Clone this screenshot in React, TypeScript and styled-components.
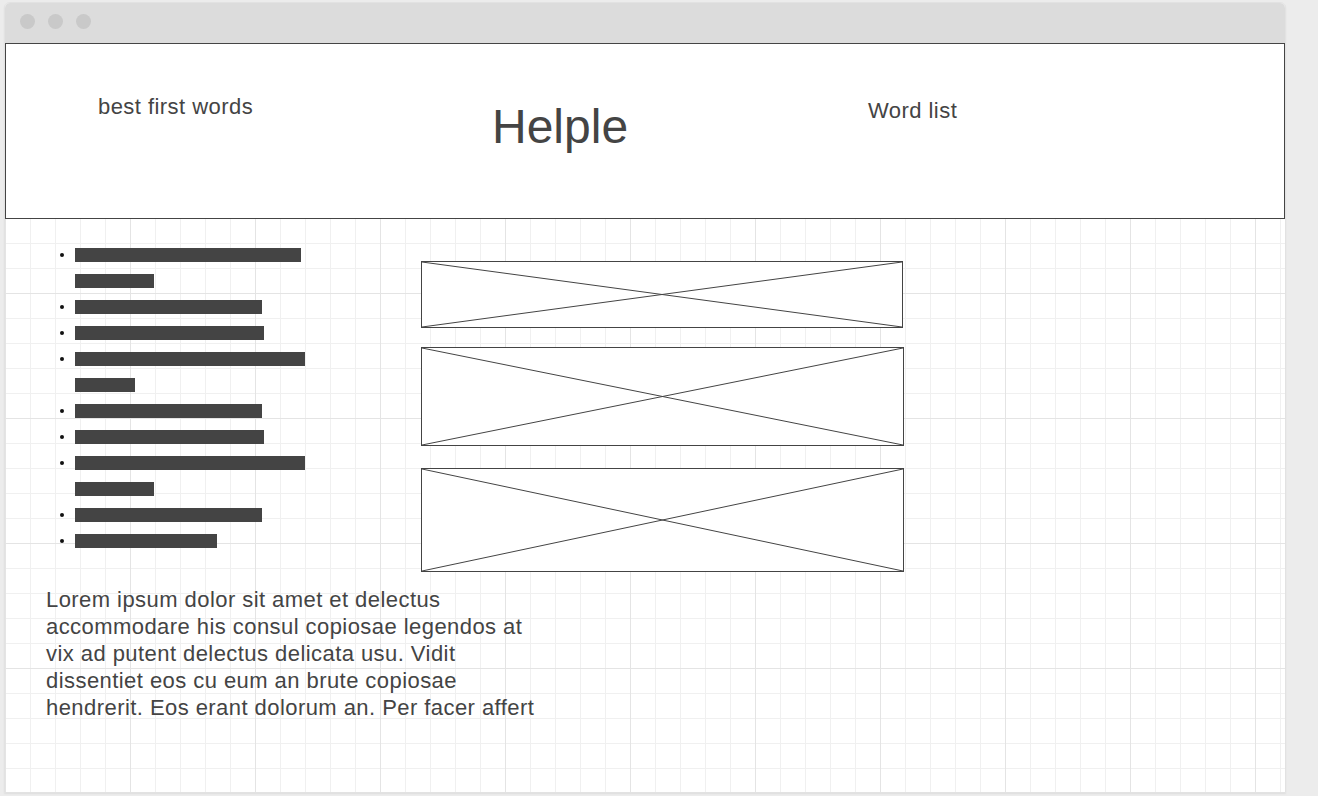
import React from "react";
import styled, { createGlobalStyle } from "styled-components";

const GlobalStyle = createGlobalStyle`
  html, body {
    margin: 0;
    padding: 0;
    background: #ececec;
    font-family: "Liberation Sans", Arial, sans-serif;
    color: #444;
  }
  * { box-sizing: border-box; }
`;

const Page = styled.div`
  padding: 2px 0 0 4px;
  width: 1318px;
  height: 796px;
  overflow: hidden;
`;

const Window = styled.div`
  width: 1282px;
  height: 791px;
  border: 1px solid #e2e2e2;
  border-radius: 6px 6px 0 0;
  display: flex;
  flex-direction: column;
  box-shadow: 0 1px 2px rgba(0, 0, 0, 0.06);
  background: #fff;
`;

const TitleBar = styled.div`
  height: 40px;
  flex: none;
  background: #dcdcdc;
  border-radius: 5px 5px 0 0;
  display: flex;
  align-items: flex-start;
  gap: 13px;
  padding: 11px 0 0 15px;
`;

const Dot = styled.span`
  width: 15px;
  height: 15px;
  border-radius: 50%;
  background: #c9c9c9;
`;

const Content = styled.div`
  flex: 1;
  background-color: #fff;
  background-image:
    linear-gradient(to right, #e4e4e4 1px, transparent 1px),
    linear-gradient(to bottom, #e4e4e4 1px, transparent 1px),
    linear-gradient(to right, #f0f0f0 1px, transparent 1px),
    linear-gradient(to bottom, #f0f0f0 1px, transparent 1px);
  background-size: 125px 125px, 125px 125px, 25px 25px, 25px 25px;
  display: flex;
  flex-direction: column;
`;

const Header = styled.header`
  height: 176px;
  flex: none;
  border: 1px solid #444;
  background: #fff;
  display: grid;
  grid-template-columns: 394px 376px 1fr;
  align-items: start;
  padding-left: 92px;
`;

const NavText = styled.div<{ $top: number }>`
  font-size: 22px;
  line-height: 26px;
  letter-spacing: 0.45px;
  margin-top: ${(p) => p.$top}px;
  color: #444;
`;

const Logo = styled.h1`
  margin: 55px 0 0 0;
  font-size: 48px;
  line-height: 56px;
  font-weight: 400;
  color: #444;
`;

const Main = styled.main`
  padding: 23px 0 0 55px;
`;

const Row = styled.div`
  display: grid;
  grid-template-columns: 361px 484px;
  align-items: start;
`;

const List = styled.ul`
  margin: 0;
  padding: 0;
  list-style: none;
`;

const Item = styled.li`
  display: grid;
  grid-template-columns: 15px 1fr;
  &::before {
    content: "";
    width: 4px;
    height: 4px;
    border-radius: 50%;
    background: #111;
    margin-top: 11px;
  }
`;

const Lines = styled.div`
  display: flex;
  flex-direction: column;
`;

const Bar = styled.span<{ $w: number }>`
  display: block;
  height: 14px;
  margin: 6px 0;
  width: ${(p) => p.$w}px;
  background: #444;
`;

const Images = styled.div`
  display: flex;
  flex-direction: column;
  align-items: flex-start;
`;

const Placeholder = styled.div<{ $w: number; $h: number; $mt: number }>`
  width: ${(p) => p.$w}px;
  height: ${(p) => p.$h}px;
  margin-top: ${(p) => p.$mt}px;
  border: 1px solid #444;
  background: #fff;
  svg {
    display: block;
    width: 100%;
    height: 100%;
  }
`;

const Paragraph = styled.p`
  margin: 14px 0 0 -14px;
  width: 495px;
  font-size: 22px;
  line-height: 27px;
  letter-spacing: 0.44px;
  color: #444;
`;

const items: number[][] = [
  [226, 79],
  [187],
  [189],
  [230, 60],
  [187],
  [189],
  [230, 79],
  [187],
  [142],
];

const boxes = [
  { w: 482, h: 67, mt: 19 },
  { w: 483, h: 99, mt: 19 },
  { w: 483, h: 104, mt: 22 },
];

const CrossBox: React.FC<{ w: number; h: number; mt: number }> = ({ w, h, mt }) => (
  <Placeholder $w={w} $h={h} $mt={mt}>
    <svg viewBox="0 0 100 100" preserveAspectRatio="none">
      <line x1="0" y1="0" x2="100" y2="100" stroke="#444" strokeWidth="1" vectorEffect="non-scaling-stroke" />
      <line x1="100" y1="0" x2="0" y2="100" stroke="#444" strokeWidth="1" vectorEffect="non-scaling-stroke" />
    </svg>
  </Placeholder>
);

export default function App() {
  return (
    <>
      <GlobalStyle />
      <Page>
        <Window>
          <TitleBar>
            <Dot />
            <Dot />
            <Dot />
          </TitleBar>
          <Content>
            <Header>
              <NavText $top={50}>best first words</NavText>
              <Logo>Helple</Logo>
              <NavText $top={54}>Word list</NavText>
            </Header>
            <Main>
              <Row>
                <List>
                  {items.map((bars, i) => (
                    <Item key={i}>
                      <Lines>
                        {bars.map((w, j) => (
                          <Bar key={j} $w={w} />
                        ))}
                      </Lines>
                    </Item>
                  ))}
                </List>
                <Images>
                  {boxes.map((b, i) => (
                    <CrossBox key={i} {...b} />
                  ))}
                </Images>
              </Row>
              <Paragraph>
                Lorem ipsum dolor sit amet et delectus accommodare his consul copiosae legendos at vix ad
                putent delectus delicata usu. Vidit dissentiet eos cu eum an brute copiosae hendrerit. Eos
                erant dolorum an. Per facer affert
              </Paragraph>
            </Main>
          </Content>
        </Window>
      </Page>
    </>
  );
}
